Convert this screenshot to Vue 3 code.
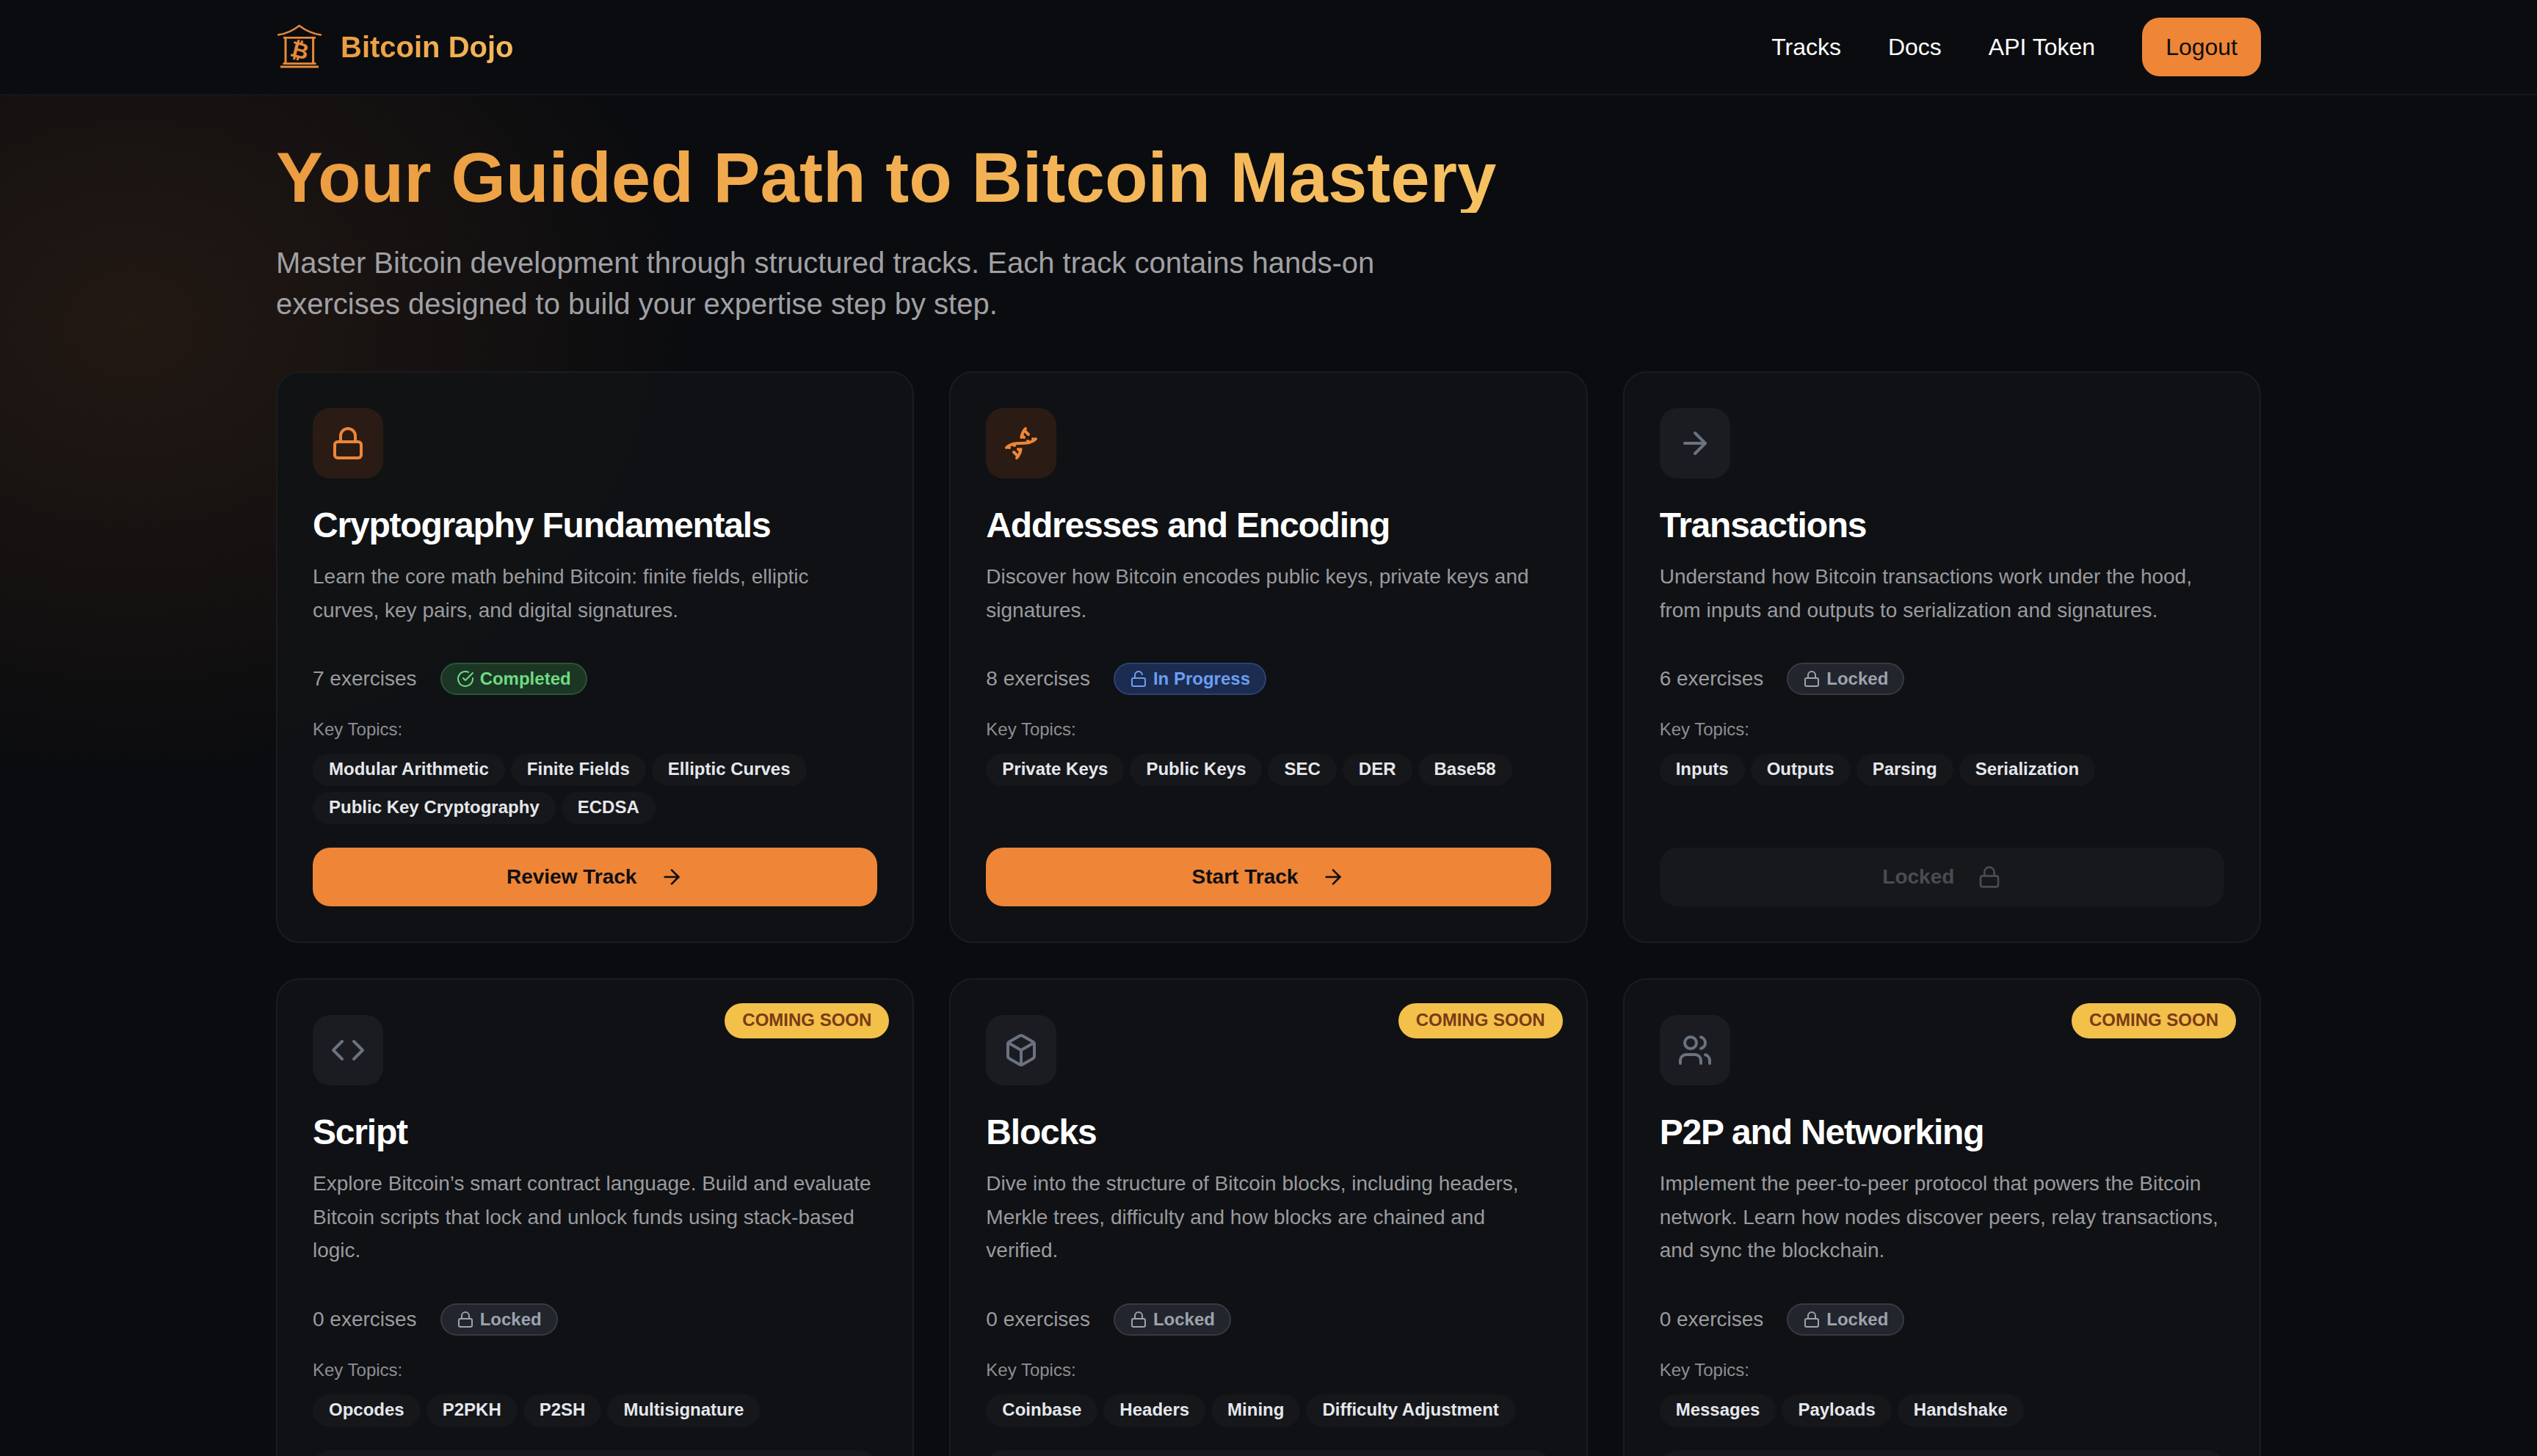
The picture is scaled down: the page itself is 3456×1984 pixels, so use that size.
<script setup>
import { h } from 'vue';

const icons = {
  lock: ['M5 11h14a2 2 0 0 1 2 2v7a2 2 0 0 1-2 2H5a2 2 0 0 1-2-2v-7a2 2 0 0 1 2-2Z', 'M7 11V7a5 5 0 0 1 10 0v4'],
  unlock: ['M5 11h14a2 2 0 0 1 2 2v7a2 2 0 0 1-2 2H5a2 2 0 0 1-2-2v-7a2 2 0 0 1 2-2Z', 'M7 11V7a5 5 0 0 1 9.9-1'],
  check: ['M22 11.08V12a10 10 0 1 1-5.93-9.14', 'm9 11 3 3L22 4'],
  arrow: ['M5 12h14', 'm12 5 7 7-7 7'],
  code: ['m16 18 6-6-6-6', 'm8 6-6 6 6 6'],
  box: [
    'M21 8a2 2 0 0 0-1-1.73l-7-4a2 2 0 0 0-2 0l-7 4A2 2 0 0 0 3 8v8a2 2 0 0 0 1 1.73l7 4a2 2 0 0 0 2 0l7-4A2 2 0 0 0 21 16Z',
    'm3.3 7 8.7 5 8.7-5',
    'M12 22V12'
  ],
  users: [
    'M16 21v-2a4 4 0 0 0-4-4H6a4 4 0 0 0-4 4v2',
    'M13 7a4 4 0 1 1-8 0 4 4 0 0 1 8 0Z',
    'M22 21v-2a4 4 0 0 0-3-3.87',
    'M16 3.13a4 4 0 0 1 0 7.75'
  ],
  dna: [
    'm10 16 1.5 1.5',
    'm14 8-1.5-1.5',
    'M15 2c-1.798 1.998-2.518 3.995-2.807 5.993',
    'm16.5 10.5 1 1',
    'm17 6-2.891-2.891',
    'M2 15c6.667-6 13.333 0 20-6',
    'm20 9 .891.891',
    'M3.109 14.109 4 15',
    'm6.5 12.5 1 1',
    'm7 18 2.891 2.891',
    'M9 22c1.798-1.998 2.518-3.995 2.807-5.993'
  ]
};

// small stroke icon, 24 grid like the rest of the set
const Icon = (props) =>
  h(
    'svg',
    {
      width: props.size,
      height: props.size,
      viewBox: '0 0 24 24',
      fill: 'none',
      stroke: 'currentColor',
      'stroke-width': 2,
      'stroke-linecap': 'round',
      'stroke-linejoin': 'round'
    },
    icons[props.name].map((d) => h('path', { d }))
  );
Icon.props = ['name', 'size'];

const statusInfo = {
  completed: { label: 'Completed', icon: 'check' },
  progress: { label: 'In Progress', icon: 'unlock' },
  locked: { label: 'Locked', icon: 'lock' }
};

const tracks = [
  {
    title: 'Cryptography Fundamentals',
    icon: 'lock',
    desc: 'Learn the core math behind Bitcoin: finite fields, elliptic curves, key pairs, and digital signatures.',
    count: 7,
    status: 'completed',
    topics: ['Modular Arithmetic', 'Finite Fields', 'Elliptic Curves', 'Public Key Cryptography', 'ECDSA'],
    action: 'Review Track'
  },
  {
    title: 'Addresses and Encoding',
    icon: 'dna',
    desc: 'Discover how Bitcoin encodes public keys, private keys and signatures.',
    count: 8,
    status: 'progress',
    topics: ['Private Keys', 'Public Keys', 'SEC', 'DER', 'Base58'],
    action: 'Start Track'
  },
  {
    title: 'Transactions',
    icon: 'arrow',
    desc: 'Understand how Bitcoin transactions work under the hood, from inputs and outputs to serialization and signatures.',
    count: 6,
    status: 'locked',
    topics: ['Inputs', 'Outputs', 'Parsing', 'Serialization']
  },
  {
    title: 'Script',
    icon: 'code',
    soon: true,
    desc: 'Explore Bitcoin’s smart contract language. Build and evaluate Bitcoin scripts that lock and unlock funds using stack-based logic.',
    count: 0,
    status: 'locked',
    topics: ['Opcodes', 'P2PKH', 'P2SH', 'Multisignature']
  },
  {
    title: 'Blocks',
    icon: 'box',
    soon: true,
    desc: 'Dive into the structure of Bitcoin blocks, including headers, Merkle trees, difficulty and how blocks are chained and verified.',
    count: 0,
    status: 'locked',
    topics: ['Coinbase', 'Headers', 'Mining', 'Difficulty Adjustment']
  },
  {
    title: 'P2P and Networking',
    icon: 'users',
    soon: true,
    desc: 'Implement the peer-to-peer protocol that powers the Bitcoin network. Learn how nodes discover peers, relay transactions, and sync the blockchain.',
    count: 0,
    status: 'locked',
    topics: ['Messages', 'Payloads', 'Handshake']
  }
];
</script>

<template>
  <div class="page">
    <header class="topbar">
      <div class="topbar-inner">
        <a class="brand">
          <svg class="brand-mark" width="64" height="64" viewBox="0 0 64 64" fill="none" stroke="#e58a3b">
            <path d="M3 15.5C14 14 24 9 31.7 3C39.5 9 50 14 61 15.5" stroke-width="2.4" stroke-linecap="round" />
            <path d="M10 19.4H54" stroke-width="2.8" />
            <path d="M13 20V54M50.6 20V54" stroke-width="3" />
            <path d="M9.5 54.6H54.5" stroke-width="2.8" />
            <path d="M6 59H58" stroke-width="3.2" />
            <text class="brand-coin" x="32" y="47" text-anchor="middle" transform="rotate(14 32 37)">₿</text>
          </svg>
          <span class="brand-name">Bitcoin Dojo</span>
        </a>
        <nav class="nav">
          <a>Tracks</a>
          <a>Docs</a>
          <a>API Token</a>
          <button class="logout">Logout</button>
        </nav>
      </div>
    </header>

    <main class="content">
      <h1 class="hero-title">Your Guided Path to Bitcoin Mastery</h1>
      <p class="hero-sub">
        Master Bitcoin development through structured tracks. Each track contains hands-on exercises designed to build
        your expertise step by step.
      </p>

      <section class="grid">
        <article v-for="t in tracks" :key="t.title" class="card">
          <span v-if="t.soon" class="soon">COMING SOON</span>
          <div class="card-icon" :class="{ active: t.action }">
            <Icon :name="t.icon" :size="48" />
          </div>
          <h2 class="card-title">{{ t.title }}</h2>
          <p class="card-desc">{{ t.desc }}</p>
          <div class="meta">
            <span class="count">{{ t.count }} exercises</span>
            <span class="status" :class="t.status">
              <Icon :name="statusInfo[t.status].icon" :size="24" />
              {{ statusInfo[t.status].label }}
            </span>
          </div>
          <div class="topics-label">Key Topics:</div>
          <div class="topics">
            <span v-for="topic in t.topics" :key="topic" class="topic">{{ topic }}</span>
          </div>
          <button v-if="t.action" class="action">
            {{ t.action }}
            <Icon name="arrow" :size="32" />
          </button>
          <button v-else class="action disabled">
            Locked
            <Icon name="lock" :size="32" />
          </button>
        </article>
      </section>
    </main>
  </div>
</template>

<style>
html,
body {
  margin: 0;
  overflow: hidden;
  background: #0b0c0f;
}
</style>

<style scoped>
.page {
  height: 1984px;
  overflow: hidden;
  background:
    radial-gradient(ellipse 760px 620px at 180px 440px, rgba(240, 134, 54, 0.1), rgba(240, 134, 54, 0) 100%),
    #0b0c0f;
  font-family: "Liberation Sans", Arial, sans-serif;
  color: #fff;
}

.topbar {
  background: #0b0c0f;
  border-bottom: 2px solid #15161a;
}

.topbar-inner {
  width: 2704px;
  height: 128px;
  margin: 0 auto;
  display: flex;
  align-items: center;
  justify-content: space-between;
}

.brand {
  display: flex;
  align-items: center;
  gap: 24px;
}

.brand-mark {
  display: block;
}

.brand-coin {
  font-family: "DejaVu Sans", sans-serif;
  font-size: 30px;
  font-weight: 700;
  fill: #e58a3b;
  stroke: none;
}

.brand-name {
  font-size: 40px;
  font-weight: 700;
  line-height: 56px;
  background: linear-gradient(90deg, #ec9c40, #f6b95c);
  -webkit-background-clip: text;
  background-clip: text;
  color: transparent;
}

.nav {
  display: flex;
  align-items: center;
  gap: 64px;
  font-size: 32px;
  line-height: 48px;
  color: #fff;
}

.logout {
  height: 80px;
  padding: 0 32px;
  border: 0;
  border-radius: 24px;
  background: #ef8537;
  color: #0e0f12;
  font: inherit;
}

.content {
  width: 2704px;
  margin: 0 auto;
  padding-top: 64px;
}

.hero-title {
  display: inline-block;
  margin: 0 0 40px;
  font-size: 96px;
  font-weight: 700;
  line-height: 96px;
  background: linear-gradient(90deg, #ec9c40, #f7c162);
  -webkit-background-clip: text;
  background-clip: text;
  color: transparent;
}

.hero-sub {
  width: 1536px;
  margin: 0 0 64px;
  font-size: 40px;
  line-height: 56px;
  color: #a0a0a4;
}

.grid {
  display: grid;
  grid-template-columns: repeat(3, 1fr);
  gap: 48px;
}

.card {
  position: relative;
  display: flex;
  flex-direction: column;
  padding: 48px;
  border: 2px solid #1a1c20;
  border-radius: 32px;
  background: rgba(16, 18, 21, 0.92);
}

.soon {
  position: absolute;
  top: 32px;
  right: 32px;
  padding: 7px 24px 9px;
  border-radius: 999px;
  background: #f3c04a;
  color: #7a3a14;
  font-size: 24px;
  font-weight: 700;
  line-height: 32px;
}

.card-icon {
  width: 96px;
  height: 96px;
  margin-bottom: 32px;
  display: flex;
  align-items: center;
  justify-content: center;
  border-radius: 24px;
  background: #1a1c21;
  color: #6b7280;
}

.card-icon.active {
  background: #2a1c14;
  color: #f08636;
}

.card-title {
  margin: 0 0 15px;
  font-size: 48px;
  font-weight: 700;
  line-height: 64px;
  letter-spacing: -1.2px;
  color: #fff;
}

.card-desc {
  margin: 0 0 49px;
  font-size: 28px;
  line-height: 45.5px;
  color: #9a9a9e;
}

.meta {
  display: flex;
  align-items: center;
  gap: 32px;
  margin-bottom: 31px;
}

.count {
  font-size: 28px;
  line-height: 40px;
  color: #9b9b9f;
}

.status {
  display: inline-flex;
  align-items: center;
  gap: 8px;
  height: 44px;
  box-sizing: border-box;
  padding: 0 20px;
  border: 2px solid;
  border-radius: 999px;
  font-size: 24px;
  font-weight: 700;
}

.status.completed {
  background: #1c3625;
  border-color: #2b5537;
  color: #6ddc82;
}

.status.progress {
  background: #1b2c50;
  border-color: #2a4374;
  color: #6c9ef2;
}

.status.locked {
  background: #22252c;
  border-color: #363a44;
  color: #9ca3af;
}

.topics-label {
  margin-bottom: 17px;
  font-size: 24px;
  line-height: 32px;
  color: #8e8e93;
}

.topics {
  display: flex;
  flex-wrap: wrap;
  gap: 8px;
  margin-bottom: 32px;
}

.topic {
  padding: 5px 22px 7px;
  border-radius: 999px;
  background: #15171b;
  color: #e5e7eb;
  font-size: 24px;
  font-weight: 700;
  line-height: 32px;
}

.action {
  display: flex;
  align-items: center;
  justify-content: center;
  gap: 32px;
  height: 80px;
  margin-top: auto;
  padding: 0;
  border: 0;
  border-radius: 24px;
  background: #ef8537;
  color: #0e0f12;
  font-family: inherit;
  font-size: 28px;
  font-weight: 700;
}

.action.disabled {
  background: #16181c;
  color: #4a4c51;
}
</style>
